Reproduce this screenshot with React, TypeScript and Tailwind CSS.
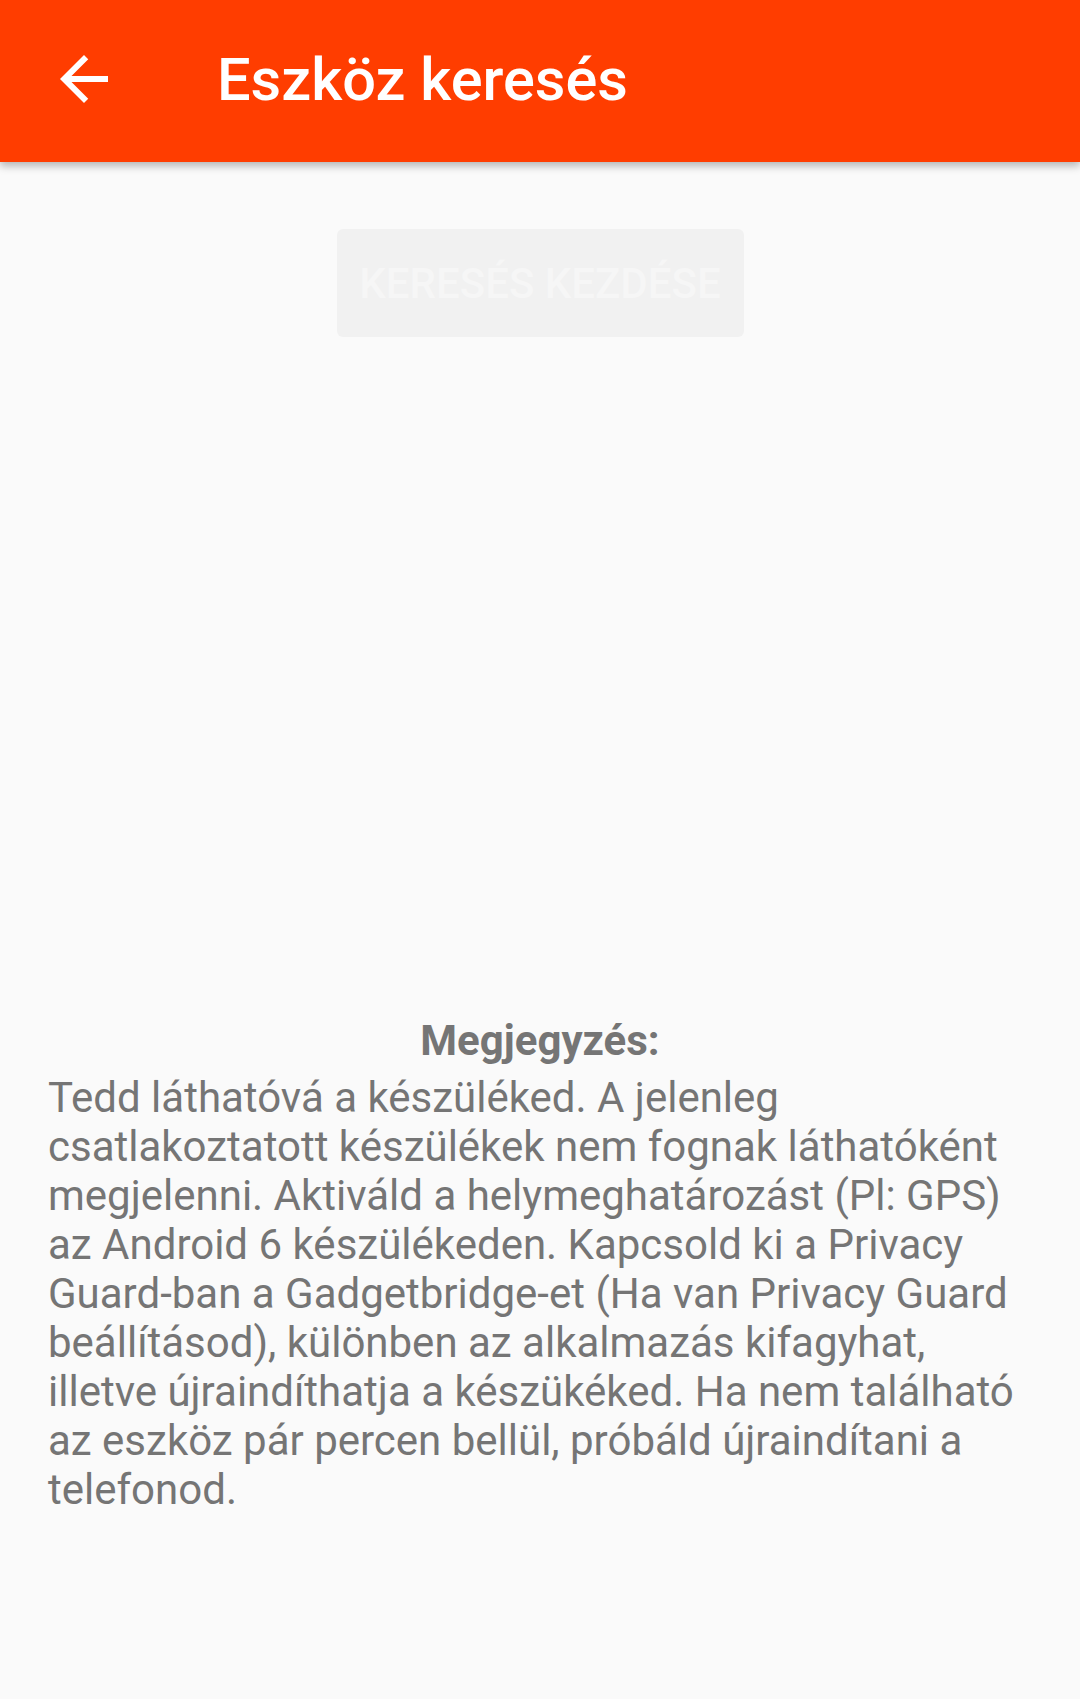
const lines = [
  "Tedd láthatóvá a készüléked. A jelenleg",
  "csatlakoztatott készülékek nem fognak láthatóként",
  "megjelenni. Aktiváld a helymeghatározást (Pl: GPS)",
  "az Android 6 készülékeden. Kapcsold ki a Privacy",
  "Guard-ban a Gadgetbridge-et (Ha van Privacy Guard",
  "beállításod), különben az alkalmazás kifagyhat,",
  "illetve újraindíthatja a készükéked. Ha nem található",
  "az eszköz pár percen bellül, próbáld újraindítani a",
  "telefonod.",
];

const BackArrow = () => (
  <svg width="72" height="72" viewBox="0 0 24 24" fill="white" aria-hidden="true">
    <path d="M20 11H7.83l5.59-5.59L12 4l-8 8 8 8 1.41-1.41L7.83 13H20v-2z" />
  </svg>
);

export default function App() {
  return (
    <div
      className="min-h-[1699px] w-[1080px] bg-[#fafafa] flex flex-col"
      style={{ fontFamily: "Roboto, 'Liberation Sans', sans-serif" }}
    >
      {/* Toolbar */}
      <header className="relative z-10 h-[162px] bg-[#ff3d00] flex items-center shadow-[0_4px_8px_rgba(0,0,0,0.28)]">
        <div className="ml-[48px] w-[72px] h-[72px] flex items-center justify-center -mt-[4px]">
          <BackArrow />
        </div>
        <h1 className="ml-[97px] text-[59.5px] font-medium text-white leading-none -mt-[1px]">
          Eszköz keresés
        </h1>
      </header>

      {/* Scan button */}
      <div className="flex justify-center pt-[67px]">
        <button
          disabled
          className="w-[407px] h-[108px] rounded-[6px] bg-[#f1f1f1] text-[#f6f6f6] text-[42px] font-medium uppercase"
        >
          Keresés kezdése
        </button>
      </div>

      {/* Note */}
      <div className="mt-[679px] px-[48px] text-[42px] leading-[49px] text-[#757575]">
        <p className="text-center font-bold">Megjegyzés:</p>
        <p className="mt-[8px]">
          {lines.map((l, i) => (
            <span key={i} className="block whitespace-nowrap">
              {l}
            </span>
          ))}
        </p>
      </div>
    </div>
  );
}
